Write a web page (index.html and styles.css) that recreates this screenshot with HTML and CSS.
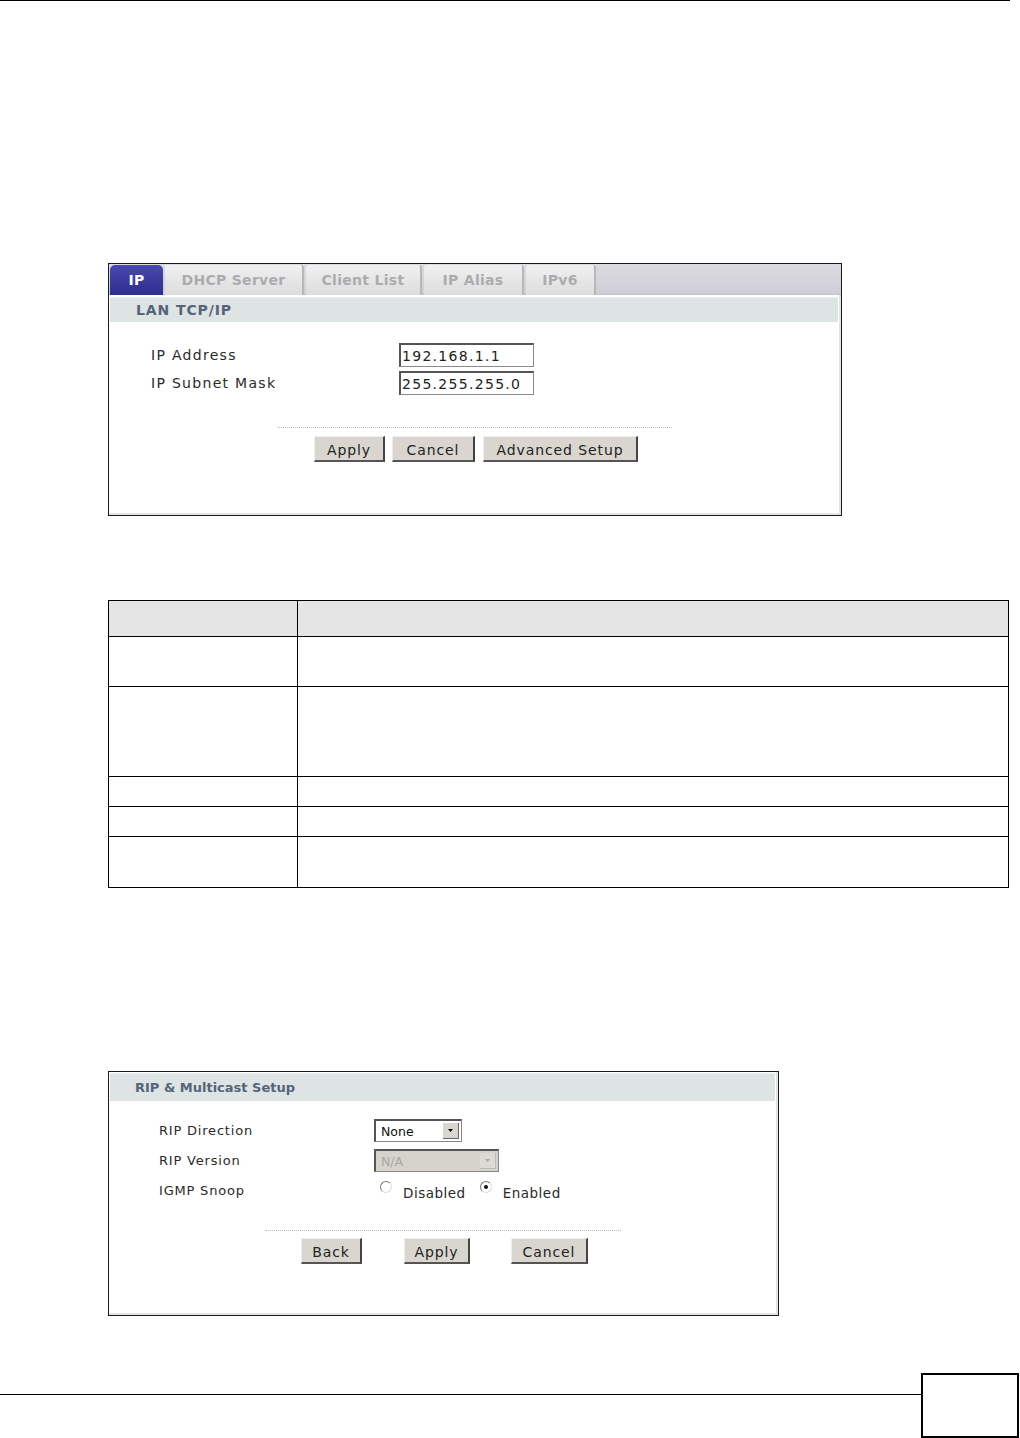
FILE: index.html
```html
<!DOCTYPE html>
<html>
<head>
<meta charset="utf-8">
<link rel="stylesheet" href="styles.css">
</head>
<body>
<div class="page">
  <div class="top-rule"></div>

  <div class="shot shot-lan">
    <div class="tabs">
      <div class="tab active">IP</div>
      <div class="tab t-dhcp">DHCP Server</div>
      <div class="tab t-client">Client List</div>
      <div class="tab t-alias">IP Alias</div>
      <div class="tab t-v6">IPv6</div>
    </div>
    <div class="sect sect-lan">LAN TCP/IP</div>
    <div class="form form-lan">
      <div class="row"><span class="lbl">IP Address</span><span class="inp">192.168.1.1</span></div>
      <div class="row"><span class="lbl">IP Subnet Mask</span><span class="inp">255.255.255.0</span></div>
    </div>
    <div class="dots dots-lan"></div>
    <div class="btns btns-lan">
      <span class="btn b-apply">Apply</span>
      <span class="btn b-cancel">Cancel</span>
      <span class="btn b-adv">Advanced Setup</span>
    </div>
  </div>

  <table class="desc">
    <tr class="hd"><td class="c1"></td><td></td></tr>
    <tr class="r1"><td class="c1"></td><td></td></tr>
    <tr class="r2"><td class="c1"></td><td></td></tr>
    <tr class="r3"><td class="c1"></td><td></td></tr>
    <tr class="r4"><td class="c1"></td><td></td></tr>
    <tr class="r5"><td class="c1"></td><td></td></tr>
  </table>

  <div class="shot shot-rip">
    <div class="sect sect-rip">RIP &amp; Multicast Setup</div>
    <div class="form form-rip">
      <div class="row"><span class="lbl">RIP Direction</span>
        <span class="sel sel-none"><span class="sv">None</span><span class="arr"><svg width="9" height="9" viewBox="0 0 9 9"><path d="M2 3h5L4.5 6z" fill="#000"/></svg></span></span>
      </div>
      <div class="row"><span class="lbl">RIP Version</span>
        <span class="sel sel-na"><span class="sv">N/A</span><span class="arr"><svg width="9" height="9" viewBox="0 0 9 9"><path d="M2 3h5L4.5 6z" fill="#a8a8a8"/></svg></span></span>
      </div>
      <div class="row"><span class="lbl">IGMP Snoop</span>
        <span class="radios">
          <span class="radio"></span><span class="rlbl">Disabled</span>
          <span class="radio on"></span><span class="rlbl">Enabled</span>
        </span>
      </div>
    </div>
    <div class="dots dots-rip"></div>
    <div class="btns btns-rip">
      <span class="btn b-back">Back</span>
      <span class="btn b-apply2">Apply</span>
      <span class="btn b-cancel2">Cancel</span>
    </div>
  </div>

  <div class="footer">
    <div class="foot-rule"></div>
    <div class="pagebox"></div>
  </div>
</div>
</body>
</html>
```

FILE: styles.css
```css
* { box-sizing: border-box; }
html, body { margin: 0; padding: 0; background: #fff; }
body { font-family: "DejaVu Sans", Verdana, sans-serif; color: #222; }
.page { width: 1020px; height: 1438px; position: relative; }

.top-rule { width: 1010px; height: 1px; background: #000; }

/* screenshot frames */
.shot {
  margin-left: 108px;
  border: 1px solid #1a1a1a;
  box-shadow: inset -2px -2px 0 #e4e4e4;
  background: #fff;
}
.shot-lan { margin-top: 262px; width: 734px; height: 253px; }

.tabs {
  display: flex;
  height: 31px;
  background: linear-gradient(#dcdce2, #cfcdd6);
  padding-left: 1px;
  gap: 2px;
  border-bottom: 1px solid #c4c4c8;
}
.tab {
  height: 30px;
  margin-top: 1px;
  display: flex; align-items: center; justify-content: center;
  font-weight: bold; font-size: 14px; letter-spacing: 0.3px;
  color: #acacb0;
  background: linear-gradient(#f1f1f1, #dcdcdc);
  border-right: 2px solid #b8b8b8;
  border-radius: 3px 3px 0 0;
}
.tab.active {
  width: 53px;
  color: #fff;
  background: linear-gradient(#4848b0, #2e2e8e);
  border-right: none;
  border-radius: 5px 5px 0 0;
}
.t-dhcp { width: 139px; }
.t-client { width: 116px; }
.t-alias { width: 100px; }
.t-v6 { width: 70px; }

.sect {
  margin: 2px 3px 0 1px;
  height: 25px;
  background: #dde4e3;
  border-top: 1px solid #e9eded;
  color: #56647a;
  font-weight: bold; font-size: 13px;
  padding-left: 26px;
  display: flex; align-items: center;
}
.sect-lan { font-size: 14px; letter-spacing: 0.9px; }

.form { display: flex; flex-direction: column; }
.form .row { display: flex; align-items: center; }
.lbl { font-size: 14px; color: #2a2a2a; letter-spacing: 1.3px; }

.form-lan { padding-top: 21px; padding-left: 42px; gap: 4px; }
.form-lan .lbl { width: 248px; }
.inp {
  width: 135px; height: 24px;
  border: 1px solid #8a8a8a;
  border-top: 2px solid #555;
  border-left: 2px solid #555;
  font-size: 14px; letter-spacing: 1.3px;
  padding-left: 1px;
  display: flex; align-items: center;
  background: #fff;
}

.dots { border-top: 1px dotted #bdbdbd; }
.dots-lan { margin: 32px 0 0 168px; width: 395px; }

.btns { display: flex; }
.btn {
  height: 26px;
  display: flex; align-items: center; justify-content: center;
  background: #d9d6d0;
  border-right: 2px solid #444;
  border-bottom: 2px solid #555;
  border-top: 1px solid #eee;
  border-left: 1px solid #eee;
  font-size: 14px; color: #222; letter-spacing: 0.9px;
  padding-top: 2px;
}
.btns-lan { margin: 8px 0 0 205px; gap: 7px; }
.b-apply { width: 71px; }
.b-cancel { width: 83px; margin-right: 1px; }
.b-adv { width: 155px; }

/* table */
.desc {
  margin: 84px 0 0 108px;
  width: 901px;
  border-collapse: collapse;
}
.desc td { border: 1px solid #000; padding: 0; }
.desc .c1 { width: 189px; }
.desc .hd td { background: #e5e5e5; height: 36px; }
.desc .r1 td { height: 50px; }
.desc .r2 td { height: 90px; }
.desc .r3 td { height: 30px; }
.desc .r4 td { height: 30px; }
.desc .r5 td { height: 51px; }

/* rip screenshot */
.shot-rip { margin-top: 183px; width: 671px; height: 245px; }
.sect-rip { margin-top: 1px; height: 28px; padding-left: 25px; }

.form-rip { padding-top: 18px; padding-left: 50px; gap: 7px; }
.form-rip .row { height: 23px; }
.form-rip .lbl { width: 215px; font-size: 13px; letter-spacing: 0.8px; }
.sel {
  display: flex; align-items: center; justify-content: space-between;
  height: 23px;
  border: 1px solid #888;
  border-top: 2px solid #555;
  border-left: 2px solid #555;
  font-size: 12.5px;
  padding-left: 5px; padding-right: 2px;
}
.sel-none { width: 88px; background: #fff; color: #111; }
.sel-na { width: 125px; background: #d6d3cc; color: #a8a8a8; }
.arr {
  width: 16px; height: 16px;
  background: #d9d6d0;
  border-right: 1px solid #666; border-bottom: 1px solid #666;
  display: flex; align-items: center; justify-content: center;
}
.sel-na .arr { background: #dcdad4; border-color: #bbb; }
.radios { display: flex; align-items: center; margin-left: 6px; }
.radio {
  width: 12px; height: 12px; border-radius: 50%;
  border: 1px solid #777;
  border-right-color: #ddd; border-bottom-color: #ddd;
  background: #fff; position: relative;
  margin-top: -8px;
}
.radio.on::after {
  content: ""; position: absolute; left: 3px; top: 3px;
  width: 4px; height: 4px; border-radius: 50%; background: #111;
}
.rlbl { font-size: 13.5px; margin-left: 11px; margin-right: 14px; letter-spacing: 0.5px; color: #2a2a2a; padding-top: 4px; }

.dots-rip { margin: 28px 0 0 156px; width: 356px; }
.btns-rip { margin: 7px 0 0 192px; }
.b-back { width: 61px; }
.b-apply2 { width: 66px; margin-left: 42px; }
.b-cancel2 { width: 77px; margin-left: 41px; }

/* footer */
.footer { position: absolute; left: 0; top: 1373px; width: 1020px; display: flex; }
.foot-rule { width: 921px; height: 1px; background: #000; margin-top: 21px; }
.pagebox { width: 98px; height: 65px; border: 2px solid #000; }
```
